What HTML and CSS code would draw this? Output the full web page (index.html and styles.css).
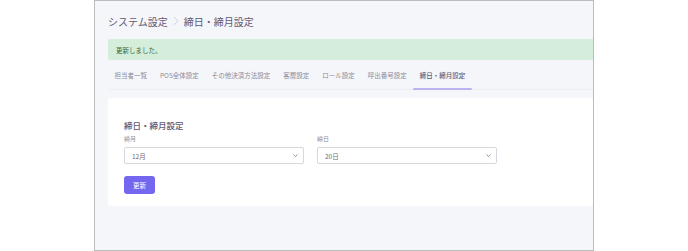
FILE: index.html
```html
<!DOCTYPE html>
<html lang="ja">
<head>
    <meta charset="UTF-8">
    <meta name="viewport" content="width=device-width, initial-scale=1.0">
    <title>締日・締月設定</title>
    <link rel="stylesheet" href="styles.css">
</head>
<body>
    <div class="frame">
        <div class="breadcrumb">
            <span>システム設定</span>
            <svg class="crumb-sep" width="6" height="10" viewBox="0 0 6 10"><path d="M1 1 L5 5 L1 9" fill="none" stroke="#c9c9cf" stroke-width="0.8"/></svg>
            <span>締日・締月設定</span>
        </div>
        <div class="alert">更新しました。</div>
        <ul class="tabs">
            <li>担当者一覧</li>
            <li>POS全体設定</li>
            <li>その他決済方法設定</li>
            <li>客層設定</li>
            <li>ロール設定</li>
            <li>呼出番号設定</li>
            <li class="active">締日・締月設定</li>
        </ul>
        <div class="card">
            <h2>締日・締月設定</h2>
            <form class="form-row">
                <div class="form-group">
                    <label>締月</label>
                    <div class="select">
                        <span>12月</span>
                        <svg width="5" height="3" viewBox="0 0 5 3"><path d="M0.5 0.5 L2.5 2.5 L4.5 0.5" fill="none" stroke="#6e6b7b" stroke-width="0.7"/></svg>
                    </div>
                </div>
                <div class="form-group">
                    <label>締日</label>
                    <div class="select">
                        <span>20日</span>
                        <svg width="5" height="3" viewBox="0 0 5 3"><path d="M0.5 0.5 L2.5 2.5 L4.5 0.5" fill="none" stroke="#6e6b7b" stroke-width="0.7"/></svg>
                    </div>
                </div>
            </form>
            <button type="button">更新</button>
        </div>
    </div>
</body>
</html>
```

FILE: styles.css
```css
:root { --primary: #7367f0; --text: #6e6b7b; --heading: #5e5873; --border: #d8d6de; }
html, body { margin: 0; background: #fff; font-family: "Noto Sans CJK JP", "Noto Sans", sans-serif; color: var(--text); }
.frame { box-sizing: border-box; margin-left: 94px; width: 500px; height: 251px; border: 1px solid #bcbcbc; background: #f5f6fa; padding: 0 0 0 13px; overflow: hidden; }
.breadcrumb { height: 38px; display: flex; align-items: center; gap: 4px; font-size: 10px; color: var(--heading); padding-top: 2px; box-sizing: border-box; }
.crumb-sep { margin: 0 1px; }
.alert { height: 21px; display: flex; align-items: center; padding-left: 8px; background: #d5eddb; color: #2e6b3d; font-size: 6.5px; border-radius: 2px 0 0 2px; }
.tabs { list-style: none; margin: 0; padding: 0; display: flex; height: 30px; border-bottom: 1px solid #eceef3; box-sizing: border-box; }
.tabs li { padding: 0 6.5px; font-size: 6.5px; color: #8d8a98; display: flex; align-items: center; position: relative; }
.tabs li.active { color: #5e5873; font-weight: 500; }
.tabs li.active::after { content: ""; position: absolute; left: 0; right: 0; bottom: -1px; height: 2px; background: #b9b3f3; border-radius: 1px; }
.card { margin-top: 8px; background: #fff; height: 108px; box-sizing: border-box; padding: 20px 16px 12px; border-radius: 3px 0 0 3px; }
.card h2 { margin: 0 0 2px; font-size: 8.5px; line-height: 14px; font-weight: 500; color: var(--heading); }
.form-row { display: grid; grid-template-columns: 180px 180px; gap: 13px; }
.form-group label { display: block; font-size: 6px; line-height: 10px; color: #8d8a98; margin-bottom: 3px; }
.select { box-sizing: border-box; height: 17px; border: 1px solid var(--border); border-radius: 2px; display: flex; align-items: center; justify-content: space-between; padding: 0 5px 0 7px; font-size: 6.5px; color: var(--text); }
button { margin-top: 12px; width: 31px; height: 18px; border: none; border-radius: 3px; background: var(--primary); color: #fff; font-family: inherit; font-size: 6.5px; padding: 0; cursor: pointer; }
```
